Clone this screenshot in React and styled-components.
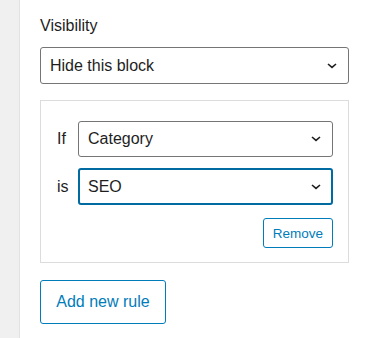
import React from "react";
import styled, { createGlobalStyle } from "styled-components";

const Global = createGlobalStyle`
  html, body { margin: 0; padding: 0; background: #fff; }
  body { font-family: "Liberation Sans", Arial, sans-serif; color: #1e1e1e; }
  * { box-sizing: border-box; }
`;

const Page = styled.div`
  display: flex;
  height: 338px;
  overflow: hidden;
`;

const Gutter = styled.div`
  width: 20px;
  flex: none;
  background: #f0f0f0;
  border-right: 1px solid #e2e2e2;
`;

const Panel = styled.div`
  padding: 16px 0 0 20px;
  width: 329px;
`;

const Label = styled.div`
  font-size: 16px;
  line-height: 20px;
  margin-bottom: 11px;
`;

const SelectBox = styled.div`
  display: flex;
  align-items: center;
  justify-content: space-between;
  flex: 1;
  height: ${(p) => p.$h || 37}px;
  padding: 0 ${(p) => (p.$focus ? 10 : 11)}px 0 ${(p) => (p.$focus ? 8 : 9)}px;
  border: ${(p) => (p.$focus ? "2px solid #006ba1" : "1px solid #757575")};
  border-radius: 3px;
  font-size: 16px;
  background: #fff;
`;

const Chevron = () => (
  <svg width="10" height="6" viewBox="0 0 10 6" fill="none">
    <path d="M1 1l4 3.4L9 1" stroke="#1e1e1e" strokeWidth="1.6" />
  </svg>
);

const Select = ({ children, ...rest }) => (
  <SelectBox {...rest}>
    <span>{children}</span>
    <Chevron />
  </SelectBox>
);

const RuleBox = styled.div`
  margin-top: 16px;
  border: 1px solid #dcdcdc;
  padding: 20px 15px 14px 16px;
  display: flex;
  flex-direction: column;
`;

const Row = styled.div`
  display: flex;
  align-items: center;
  margin-bottom: ${(p) => p.$mb || 0}px;
`;

const RowLabel = styled.span`
  width: 21px;
  flex: none;
  font-size: 16px;
`;

const Actions = styled.div`
  display: flex;
  justify-content: flex-end;
  margin-top: 13px;
`;

const OutlineButton = styled.button`
  font-family: "Liberation Sans", Arial, sans-serif;
  background: #fff;
  color: #007cba;
  border: 1px solid #007cba;
  border-radius: 3px;
  font-size: ${(p) => (p.$small ? 13.5 : 16)}px;
  height: ${(p) => (p.$small ? 30 : 44)}px;
  width: ${(p) => (p.$small ? 70 : 126)}px;
  padding: 0;
  cursor: pointer;
`;

const Footer = styled.div`
  margin-top: 17px;
  display: flex;
`;

export default function App() {
  return (
    <>
      <Global />
      <Page>
        <Gutter />
        <Panel>
          <Label>Visibility</Label>
          <Select>Hide this block</Select>
          <RuleBox>
            <Row $mb={11}>
              <RowLabel>If</RowLabel>
              <Select $h={36}>Category</Select>
            </Row>
            <Row>
              <RowLabel>is</RowLabel>
              <Select $h={37} $focus>SEO</Select>
            </Row>
            <Actions>
              <OutlineButton $small>Remove</OutlineButton>
            </Actions>
          </RuleBox>
          <Footer>
            <OutlineButton>Add new rule</OutlineButton>
          </Footer>
        </Panel>
      </Page>
    </>
  );
}
